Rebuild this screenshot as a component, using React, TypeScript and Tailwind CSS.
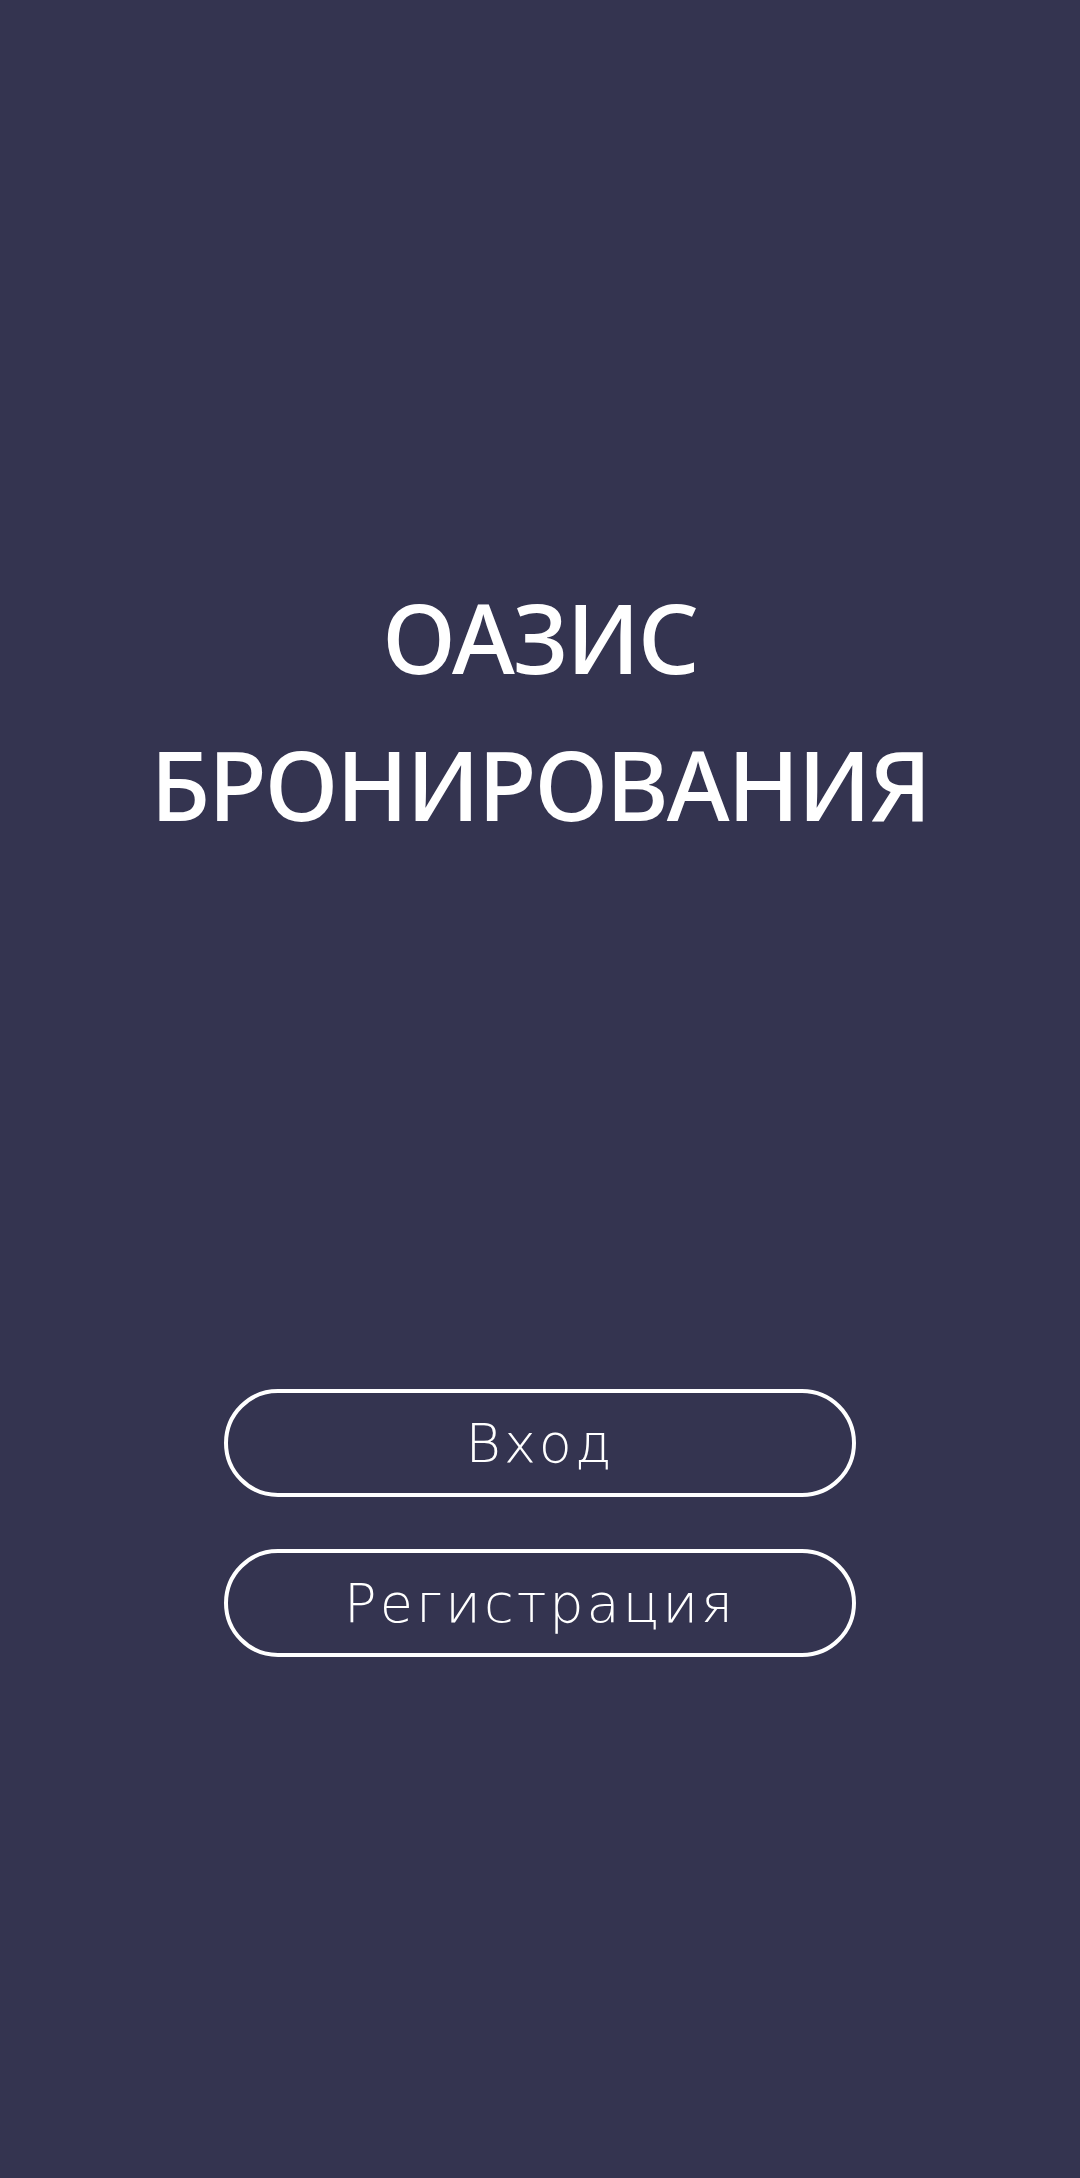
export default function App() {
  return (
    <main className="min-h-[2178px] w-full bg-[#343450] flex flex-col items-center pt-[563px]">
      <h1 className="text-white text-center text-[96px] leading-[147px] font-medium font-['Noto_Sans',sans-serif] tracking-[-2px]">
        ОАЗИС
        <br />
        БРОНИРОВАНИЯ
      </h1>

      <div className="mt-[532px] flex flex-col gap-[52px]">
        <button className="w-[632px] h-[108px] rounded-full border-[4px] border-white text-white text-[54px] font-extralight tracking-[3px] font-['DejaVu_Sans',sans-serif]">
          Вход
        </button>
        <button className="w-[632px] h-[108px] rounded-full border-[4px] border-white text-white text-[54px] font-extralight tracking-[3px] font-['DejaVu_Sans',sans-serif]">
          Регистрация
        </button>
      </div>
    </main>
  )
}
